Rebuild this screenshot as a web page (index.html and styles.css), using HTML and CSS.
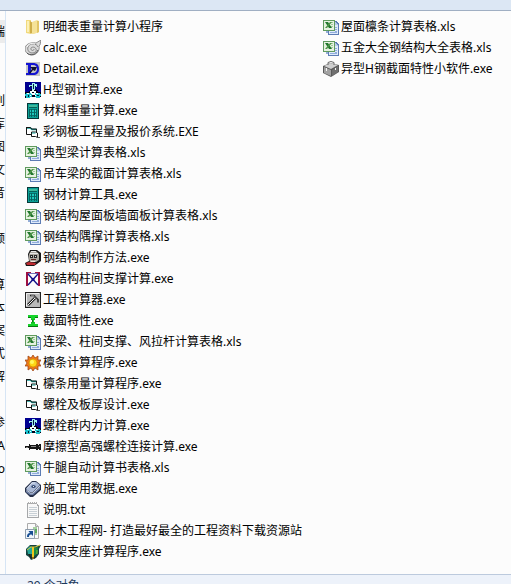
FILE: index.html
```html
<!DOCTYPE html>
<html lang="zh-CN">

<head>
    <meta charset="UTF-8">
    <meta name="viewport" content="width=device-width, initial-scale=1.0">
    <title>钢结构工具</title>
    <link rel="stylesheet" href="styles.css">
</head>

<body>

    <svg class="icon-defs" aria-hidden="true">
        <symbol id="folder" viewBox="0 0 16 16">
            <path d="M1 1l5 0v14l-5-1z" fill="#f1d97c"/>
            <path d="M2 2h2v11H2z" fill="#fbf0b8"/>
            <path d="M5 2l3 2v11l-3-1z" fill="#cfae4a"/>
            <path d="M7 3l5-2 2 1v11l-5 2H7z" fill="#f5e298"/>
            <path d="M12 2l2 0v11l-2 1z" fill="#e2c566"/>
        </symbol>
        <symbol id="shell" viewBox="0 0 16 16">
            <path d="M11 3l5-3-1 5-1 1c1 4-2 9-7 9-4 0-7-3-7-6 0-4 4-7 11-6z" fill="#dadada" stroke="#777" stroke-width=".8"/>
            <path d="M13 7c-1-4-9-4-10 0-1 3 1 6 4 6s5-2 4-4c-1-3-6-2-5 0 0 2 3 2 3 0" fill="none" stroke="#858585"/>
            <path d="M2 7c1-3 4-4 8-3" fill="none" stroke="#fff"/>
            <path d="M2 13c3 3 9 2 11-3" fill="none" stroke="#555"/>
        </symbol>
        <symbol id="detail" viewBox="0 0 16 16">
            <path d="M1 1h14v14H1z" fill="#c6c6c6"/>
            <path d="M1 2h7c4 0 6 2 6 6s-2 6-6 6H1v-2h2V4H1z" fill="#1414d2"/>
            <path d="M6 4h2c3 0 4 2 4 4s-1 4-4 4H6z" fill="#c6c6c6"/>
            <path d="M5 6h7l-2 4-2-1-3 4-1-1 3-4z" fill="#101030"/>
        </symbol>
        <symbol id="beam" viewBox="0 0 16 16" shape-rendering="crispEdges">
            <path d="M0 0h16v11H0z" fill="#000090"/>
            <path d="M0 10h3l3-3h4l3 3h3v1H0z" fill="#000018"/>
            <path d="M0 11h1v5H0zM6 13h4v2H6zM15 11h1v4h-1z" fill="#000018"/>
            <path d="M7 1h3v1h2v3h-2v3H7V5H4V3h3z" fill="#9feef2"/>
            <path d="M8 2h1v5H8zM5 4h2v1H5zM10 4h1v1h-1z" fill="#001c3c"/>
            <path d="M7 8h2v2H7zM5 9h2v2H5zM9 9h2v2H9z" fill="#f4ffff"/>
            <path d="M1 11h5v1h1v3H5v1H1v-2H0v-2h1z" fill="#1cc0cc"/>
            <path d="M10 11h5v1h1v2h-1v2h-4v-1h-1z" fill="#1cc0cc"/>
            <path d="M2 11h2v1H2zM11 11h2v1h-2zM5 13h1v1H5zM10 13h1v1h-1z" fill="#fff"/>
            <path d="M3 13h1v2H3zM12 13h2v1h-2z" fill="#002030"/>
        </symbol>
        <symbol id="calculator" viewBox="0 0 16 16" shape-rendering="crispEdges">
            <path d="M2 0h12v16H2z" fill="#053838"/>
            <path d="M3 1h10v14H3z" fill="#0aa096"/>
            <path d="M4 2h8v2H4z" fill="#3fb89c"/>
            <path d="M4 4h8v1H4z" fill="#056058"/>
            <path d="M4 6h8v1H4zM4 9h8v1H4zM4 12h8v1H4z" fill="#08726e"/>
            <path d="M4 6h1v8H4zM6 6h1v8H6zM9 6h1v8H9zM11 6h1v8h-1z" fill="#07625f"/>
            <path d="M5 7h1v2H5zM7 7h2v2H7zM10 7h1v2h-1zM5 10h1v2H5zM7 10h2v2H7zM10 10h1v2h-1z" fill="#1fc8bc"/>
        </symbol>
        <symbol id="form" viewBox="0 0 16 16">
            <path d="M2 3.500h3l2 2h4.500V9l-4 3H7l-1-1.500H2z" fill="#fff"/>
            <path d="M2 4h3.500l1.500 1.500h5" fill="none" stroke="#159a94" stroke-width="1.600"/>
            <path d="M1.500 3v7.500H6M2 3.500h3.500l1 1.500h5v3" fill="none" stroke="#151515"/>
            <path d="M6.500 8h4l2 1v4.500l-2-1h-4z" fill="#fff" stroke="#151515"/>
            <path d="M7 9h3.500" stroke="#159a94"/>
            <path d="M13 13h2v1h-2z" fill="#555"/>
        </symbol>
        <symbol id="excel" viewBox="0 0 16 16" shape-rendering="crispEdges">
            <path d="M5 2h8l3 3v11H5z" fill="#5c7cb4"/>
            <path d="M6 3h6v3h3v9H6z" fill="#dfeafa"/>
            <path d="M12 3l3 3h-3z" fill="#b7cbea"/>
            <path d="M12 8h2v1h-2zM12 10h2v1h-2zM12 12h2v1h-2zM7 13h7v1H7z" fill="#91addb"/>
            <path d="M3 12h2v2H3z" fill="#93add6"/>
            <path d="M0 1h12v11H0z" fill="#5f9a5e"/>
            <path d="M1 2h10v9H1z" fill="#e6f2e0"/>
            <path d="M8 3h2v1H8zM8 5h2v1H8zM8 7h2v1H8z" fill="#a2cba0"/>
            <g shape-rendering="auto">
                <path d="M2 3h3l4 6H6z" fill="#20762c"/>
                <path d="M7 3h2L4 9H2z" fill="#4f9548"/>
            </g>
        </symbol>
        <symbol id="method" viewBox="0 0 16 16">
            <path d="M5 0h7l4 3v8l-4 3-3 2H1l-1-3 4-2-1-7z" fill="#161616"/>
            <path d="M6 1h5l3 3v6l-3 2H5L4 9V4z" fill="#aaa69e"/>
            <path d="M5 3.500h8M6 1.500h5" stroke="#e8e8e8"/>
            <path d="M5 5h3v3H5zM9 5h3v3H9z" fill="#262626"/>
            <path d="M6 6h1v1H6zM10 6h1v1h-1z" fill="#ddd"/>
            <path d="M6 9h5v1H6z" fill="#5d2822"/>
            <path d="M1 13l3-1 7 1-1 2H2z" fill="#bd2a30"/>
            <path d="M6 11h4v1H6z" fill="#efe3da"/>
        </symbol>
        <symbol id="brace" viewBox="0 0 16 16">
            <path d="M1 1h2v14H1zM13 1h2v14h-2z" fill="#a01040"/>
            <path d="M3 1h3v1H3zM10 1h3v1h-3z" fill="#a01040"/>
            <path d="M3 3l10 11M13 3L3 14" stroke="#14148a" stroke-width="1.400"/>
            <path d="M3 2.500h10" stroke="#14148a" stroke-width=".6"/>
            <path d="M6.500 7h3v3h-3z" fill="#14148a"/>
        </symbol>
        <symbol id="hammer" viewBox="0 0 16 16">
            <path d="M0 0h16v16H0z" fill="#222"/>
            <path d="M1 1h14v14H1z" fill="#b9b9b9"/>
            <path d="M1.500 14V1.500H14" fill="none" stroke="#eee"/>
            <path d="M3 13l7-7" stroke="#222" stroke-width="2.600"/>
            <path d="M3 13l7-7" stroke="#f2f2f2"/>
            <path d="M5 3.500h4l4 4v3" fill="none" stroke="#222" stroke-width="1.500"/>
            <path d="M6 3.500h3l3 3" fill="none" stroke="#999" stroke-width=".7"/>
        </symbol>
        <symbol id="section" viewBox="0 0 16 16" shape-rendering="crispEdges">
            <path d="M3 2h10v3h-3v1H9v4h1v1h3v3H3v-3h3v-1h1V6H6V5H3z" fill="#16d52b"/>
            <path d="M3 4h3v1H3zM10 4h3v1h-3zM3 13h10v1H3zM7 7h1v3H7z" fill="#08780f"/>
            <path d="M6 6h4v1H6zM6 9h4v1H6z" fill="#12b823"/>
        </symbol>
        <symbol id="sun" viewBox="0 0 16 16">
            <path d="M8 0l2 3 3-2 0 4 3 0-2 3 2 3-3 0 0 4-3-2-2 3-2-3-3 2V11H0l2-3-2-3h3V1l3 2z" fill="#ee7b1b" stroke="#963b0c" stroke-width=".7"/>
            <circle cx="8" cy="8" r="4" fill="#ffd616" stroke="#c68b00" stroke-width=".6"/>
            <circle cx="7" cy="7" r="2" fill="#fff85f"/>
        </symbol>
        <symbol id="bolt" viewBox="0 0 16 16" shape-rendering="crispEdges">
            <path d="M0 7h4V5h1v1h6V5h2v1h1V5h2v6h-2v-1h-1v1h-2v-1H5v1H4V9H0z" fill="#151515"/>
            <path d="M1 8h2v1H1zM6 7h5v1H6zM14 7h1v1h-1z" fill="#888"/>
        </symbol>
        <symbol id="book" viewBox="0 0 16 16">
            <path d="M7 0h4l5 4v5l-8 7H5L0 11V7z" fill="#26304a"/>
            <path d="M7 1h4l4 3-7 7H5L1 8z" fill="#a9b8d6"/>
            <path d="M1 9l4 3h3l7-7v3l-7 6H5l-4-3z" fill="#7384aa"/>
            <path d="M1.500 9l4 3h2.500l7-7" fill="none" stroke="#e6ecf6" stroke-width=".8"/>
            <path d="M2 7.500l5-5.500h3" fill="none" stroke="#dbe4f2"/>
            <ellipse cx="8.500" cy="5.500" rx="2.200" ry="1.500" fill="#344a74"/>
            <path d="M8 5h1v1H8z" fill="#eee"/>
        </symbol>
        <symbol id="text" viewBox="0 0 16 16" shape-rendering="crispEdges">
            <path d="M2 1h10v1h1v1h1v13H2z" fill="#a6a8aa"/>
            <path d="M3 2h9v2h1v11H3z" fill="#f8f8f8"/>
            <path d="M4 5h8v1H4zM4 7h8v1H4zM4 9h8v1H4zM4 11h8v1H4zM4 13h8v1H4z" fill="#c8d0d6"/>
            <path d="M3 0h1v2H3zM5 0h1v2H5zM7 0h1v2H7zM9 0h1v2H9zM11 0h1v2h-1z" fill="#b0b0b0"/>
        </symbol>
        <symbol id="shortcut" viewBox="0 0 16 16">
            <path d="M2.500.500h8l3 3v12h-11z" fill="#fafafa" stroke="#aaa"/>
            <path d="M10.500.500v3h3" fill="#ddd" stroke="#aaa"/>
            <path d="M8 4h4v8H8z" fill="#a5d0a0"/>
            <path d="M10 6h2v4h-2z" fill="#5eac60"/>
            <path d="M.5 6.500h9v9h-9z" fill="#edf4fb" stroke="#8e9dac"/>
            <path d="M2 14c0-3 1-4 3-4L3.500 8H8v5l-1.500-1.500C4 11.500 4 13 4 14z" fill="#164d92"/>
        </symbol>
        <symbol id="support" viewBox="0 0 16 16">
            <path d="M1 5l4-4h6l2 1 3-1-2 4v5l-3 4-5 2-2-3-3-2z" fill="#17433f"/>
            <path d="M2 5l3-3 2 1v7H3z" fill="#24a597"/>
            <path d="M9 4l4-1-1 7-3 2z" fill="#1c8a45"/>
            <path d="M7 3h2v12H7z" fill="#f2c61c"/>
            <path d="M2 6l4-3h4l5-2" fill="none" stroke="#d5c63a"/>
            <path d="M4 10l2 4h4" fill="none" stroke="#211b18"/>
            <path d="M12 6v4" stroke="#7bd12d"/>
        </symbol>
        <symbol id="box" viewBox="0 0 16 16">
            <path d="M0 5l7-3 9 2v7l-8 5-8-4z" fill="#5a5a5a"/>
            <path d="M1 5l6-3 8 2-7 4z" fill="#cfcfcf"/>
            <path d="M1 6l7 3v6l-7-3z" fill="#a2a2a2"/>
            <path d="M9 9l6-4v6l-6 4z" fill="#707070"/>
            <path d="M5 4V1.500L8 .5l3 1V4" fill="none" stroke="#666"/>
            <path d="M3 7h1v3H3zM12 7h1v2h-1z" fill="#f4f4f4"/>
        </symbol>
    </svg>

    <div class="toolbar"></div>

    <div class="explorer">
        <nav class="tree">
            <a class="selected" href="#">端</a>
            <span></span>
            <span></span>
            <a href="#">列</a>
            <a href="#">库</a>
            <a href="#">图</a>
            <a href="#">文</a>
            <a href="#">音</a>
            <span></span>
            <a href="#">频</a>
            <span></span>
            <a href="#">算</a>
            <a href="#">本</a>
            <a href="#">案</a>
            <a href="#">式</a>
            <a href="#">解</a>
            <span></span>
            <a href="#">参</a>
            <a href="#">A</a>
            <a href="#">o</a>
        </nav>

        <ul class="files">
            <li><a href="#"><svg><use href="#folder"/></svg>明细表重量计算小程序</a></li>
            <li><a href="#"><svg><use href="#shell"/></svg>calc.exe</a></li>
            <li><a href="#"><svg><use href="#detail"/></svg>Detail.exe</a></li>
            <li><a href="#"><svg><use href="#beam"/></svg>H型钢计算.exe</a></li>
            <li><a href="#"><svg><use href="#calculator"/></svg>材料重量计算.exe</a></li>
            <li><a href="#"><svg><use href="#form"/></svg>彩钢板工程量及报价系统.EXE</a></li>
            <li><a href="#"><svg><use href="#excel"/></svg>典型梁计算表格.xls</a></li>
            <li><a href="#"><svg><use href="#excel"/></svg>吊车梁的截面计算表格.xls</a></li>
            <li><a href="#"><svg><use href="#calculator"/></svg>钢材计算工具.exe</a></li>
            <li><a href="#"><svg><use href="#excel"/></svg>钢结构屋面板墙面板计算表格.xls</a></li>
            <li><a href="#"><svg><use href="#excel"/></svg>钢结构隅撑计算表格.xls</a></li>
            <li><a href="#"><svg><use href="#method"/></svg>钢结构制作方法.exe</a></li>
            <li><a href="#"><svg><use href="#brace"/></svg>钢结构柱间支撑计算.exe</a></li>
            <li><a href="#"><svg><use href="#hammer"/></svg>工程计算器.exe</a></li>
            <li><a href="#"><svg><use href="#section"/></svg>截面特性.exe</a></li>
            <li><a href="#"><svg><use href="#excel"/></svg>连梁、柱间支撑、风拉杆计算表格.xls</a></li>
            <li><a href="#"><svg><use href="#sun"/></svg>檩条计算程序.exe</a></li>
            <li><a href="#"><svg><use href="#form"/></svg>檩条用量计算程序.exe</a></li>
            <li><a href="#"><svg><use href="#form"/></svg>螺栓及板厚设计.exe</a></li>
            <li><a href="#"><svg><use href="#beam"/></svg>螺栓群内力计算.exe</a></li>
            <li><a href="#"><svg><use href="#bolt"/></svg>摩擦型高强螺栓连接计算.exe</a></li>
            <li><a href="#"><svg><use href="#excel"/></svg>牛腿自动计算书表格.xls</a></li>
            <li><a href="#"><svg><use href="#book"/></svg>施工常用数据.exe</a></li>
            <li><a href="#"><svg><use href="#text"/></svg>说明.txt</a></li>
            <li><a href="#"><svg><use href="#shortcut"/></svg>土木工程网- 打造最好最全的工程资料下载资源站</a></li>
            <li><a href="#"><svg><use href="#support"/></svg>网架支座计算程序.exe</a></li>
            <li><a href="#"><svg><use href="#excel"/></svg>屋面檩条计算表格.xls</a></li>
            <li><a href="#"><svg><use href="#excel"/></svg>五金大全钢结构大全表格.xls</a></li>
            <li><a href="#"><svg><use href="#box"/></svg>异型H钢截面特性小软件.exe</a></li>
        </ul>
    </div>

    <footer class="status">29 个对象</footer>

</body>

</html>
```

FILE: styles.css
```css
body {
    margin: 0;
    height: 100vh;
    overflow: hidden;
    display: flex;
    flex-direction: column;
    font-family: "Noto Sans", "Noto Sans CJK SC", sans-serif;
    font-size: 12px;
    color: #000;
    background-color: #fcfcfc;
}

a {
    color: inherit;
    text-decoration: none;
}

.icon-defs {
    display: none;
}

.toolbar {
    flex: none;
    height: 10px;
    background-color: #dce7f4;
    border-bottom: 1px solid #a0afc3;
}

.explorer {
    flex: 1;
    min-height: 0;
    display: flex;
}

/* folder tree, collapsed to a thin strip */
.tree {
    flex: none;
    width: 5px;
    padding-top: 9px;
    overflow: hidden;
    border-right: 1px solid #d6e5f5;
}

.tree a,
.tree span {
    display: flex;
    justify-content: flex-end;
    height: 23px;
    line-height: 23px;
    white-space: nowrap;
}

.tree .selected {
    background-color: #ececec;
}

.files {
    flex: 1;
    display: grid;
    grid-template-rows: repeat(26, 21px);
    grid-auto-flow: column;
    grid-template-columns: 298px;
    grid-auto-columns: 1fr;
    align-content: start;
    margin: 0;
    padding: 5px 0 0 19px;
    list-style: none;
}

.files a {
    display: flex;
    align-items: center;
    gap: 2px;
    height: 21px;
    line-height: 21px;
    white-space: nowrap;
}

.files svg {
    flex: none;
    width: 16px;
    height: 16px;
}

.status {
    flex: none;
    height: 6px;
    padding: 3px 0 0 27px;
    line-height: 16px;
    color: #1e395b;
    background-color: #edf2fa;
    border-top: 1px solid #bccadd;
}
```
